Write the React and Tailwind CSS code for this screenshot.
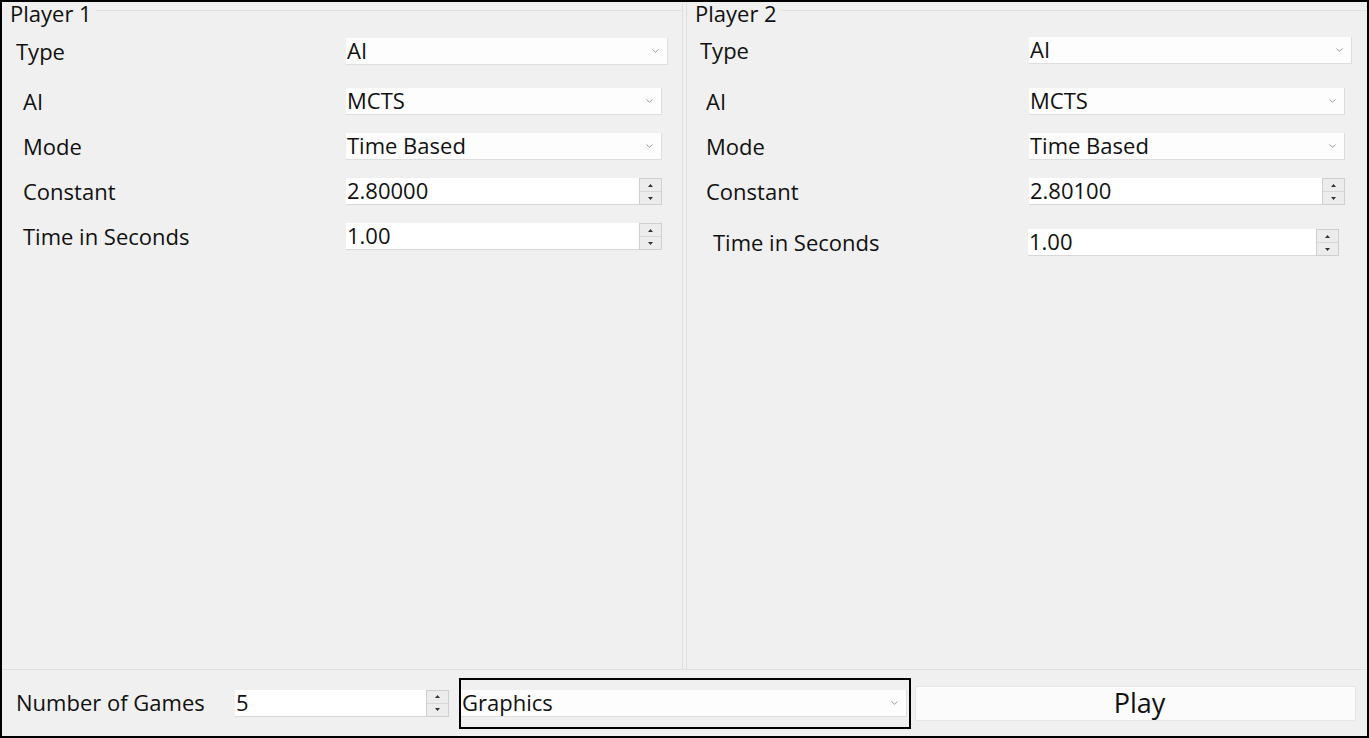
import React from "react"

const font = { fontFamily: '"Open Sans", "Noto Sans", sans-serif' }

function Chevron() {
  return (
    <svg width="7" height="4" viewBox="0 0 7 4" className="shrink-0">
      <path d="M0.5 0.5 L3.5 3.2 L6.5 0.5" fill="none" stroke="#9a9a9a" strokeWidth="1" />
    </svg>
  )
}

function Combo({ value, w, className = "" }) {
  return (
    <div
      className={`h-[27px] ${w} flex items-center justify-between bg-[#fdfdfd] border-b border-r border-[#dedede] pl-[1px] pr-[8px] ${className}`}
    >
      <span className="text-[22px] leading-none pb-[2px] text-[#111]">{value}</span>
      <Chevron />
    </div>
  )
}

function Arrows() {
  return (
    <div className="w-[23px] h-full flex flex-col border border-[#cfcfcf] bg-[#ececec]">
      <div className="flex-1 flex items-center justify-center border-b border-[#d8d8d8]">
        <svg width="5" height="3" viewBox="0 0 5 3">
          <path d="M0 3 L2.5 0 L5 3 Z" fill="#333" />
        </svg>
      </div>
      <div className="flex-1 flex items-center justify-center">
        <svg width="5" height="3" viewBox="0 0 5 3">
          <path d="M0 0 L2.5 3 L5 0 Z" fill="#333" />
        </svg>
      </div>
    </div>
  )
}

function Spin({ value, w, className = "" }) {
  return (
    <div className={`h-[27px] ${w} flex ${className}`}>
      <div className="flex-1 flex items-center bg-white border-b border-[#d6d6d6] pl-[1px]">
        <span className="text-[22px] leading-none pb-[2px] text-[#111]">{value}</span>
      </div>
      <Arrows />
    </div>
  )
}

function Row({ label, labelPad, mt, children }) {
  return (
    <div className={`flex items-center ${mt}`}>
      <div className={`${labelPad} text-[22px] leading-none pb-[2px] text-[#111]`}>{label}</div>
      {children}
    </div>
  )
}

function Group({ title, className, children }) {
  return (
    <div className={`flex flex-col ${className}`}>
      <div className="h-[22px] flex items-start">
        <span className="text-[22px] leading-[22px] text-[#111] pl-[8px] pr-[4px]">{title}</span>
        <div className="flex-1 border-t border-[#e2e2e2] mt-[8px]" />
      </div>
      {children}
    </div>
  )
}

export default function App() {
  return (
    <div className="w-[1369px] h-[738px] bg-white" style={font}>
      <div className="w-full h-full border-2 border-black bg-[#f0f0f0] flex flex-col">
        <div className="h-[668px] flex border-b border-[#e0e0e0]">
          <Group title="Player 1" className="w-[681px] border-r border-[#dedede]">
            <Row label="Type" labelPad="pl-[14px] w-[344px]" mt="mt-[14px]">
              <Combo value="AI" w="w-[322px]" />
            </Row>
            <Row label="AI" labelPad="pl-[21px] w-[344px]" mt="mt-[23px]">
              <Combo value="MCTS" w="w-[316px]" />
            </Row>
            <Row label="Mode" labelPad="pl-[21px] w-[344px]" mt="mt-[18px]">
              <Combo value="Time Based" w="w-[316px]" />
            </Row>
            <Row label="Constant" labelPad="pl-[21px] w-[344px]" mt="mt-[18px]">
              <Spin value="2.80000" w="w-[316px]" />
            </Row>
            <Row label="Time in Seconds" labelPad="pl-[21px] w-[344px]" mt="mt-[18px]">
              <Spin value="1.00" w="w-[316px]" />
            </Row>
          </Group>
          <div className="w-[3px]" />
          <Group title="Player 2" className="flex-1 border-l border-[#dedede]">
            <Row label="Type" labelPad="pl-[13px] w-[342px]" mt="mt-[13px]">
              <Combo value="AI" w="w-[323px]" />
            </Row>
            <Row label="AI" labelPad="pl-[19px] w-[342px]" mt="mt-[24px]">
              <Combo value="MCTS" w="w-[316px]" />
            </Row>
            <Row label="Mode" labelPad="pl-[19px] w-[342px]" mt="mt-[18px]">
              <Combo value="Time Based" w="w-[316px]" />
            </Row>
            <Row label="Constant" labelPad="pl-[19px] w-[342px]" mt="mt-[18px]">
              <Spin value="2.80100" w="w-[316px]" />
            </Row>
            <Row label="Time in Seconds" labelPad="pl-[26px] w-[341px]" mt="mt-[24px]">
              <Spin value="1.00" w="w-[311px]" />
            </Row>
          </Group>
        </div>
        <div className="flex-1 flex items-center">
          <div className="w-[233px] pl-[14px] text-[22px] leading-none pb-[2px] text-[#111]">Number of Games</div>
          <Spin value="5" w="w-[214px]" />
          <div className="ml-[10px] w-[452px] h-[51px] border-2 border-black flex items-center">
            <Combo value="Graphics" w="w-[446px]" />
          </div>
          <div className="ml-[4px] w-[441px] h-[35px] bg-[#fbfbfb] border border-[#e6e6e6] rounded-[2px] flex items-center justify-center pl-[8px] pb-[2px] text-[27px] leading-none text-[#111]">
            Play
          </div>
        </div>
      </div>
    </div>
  )
}
